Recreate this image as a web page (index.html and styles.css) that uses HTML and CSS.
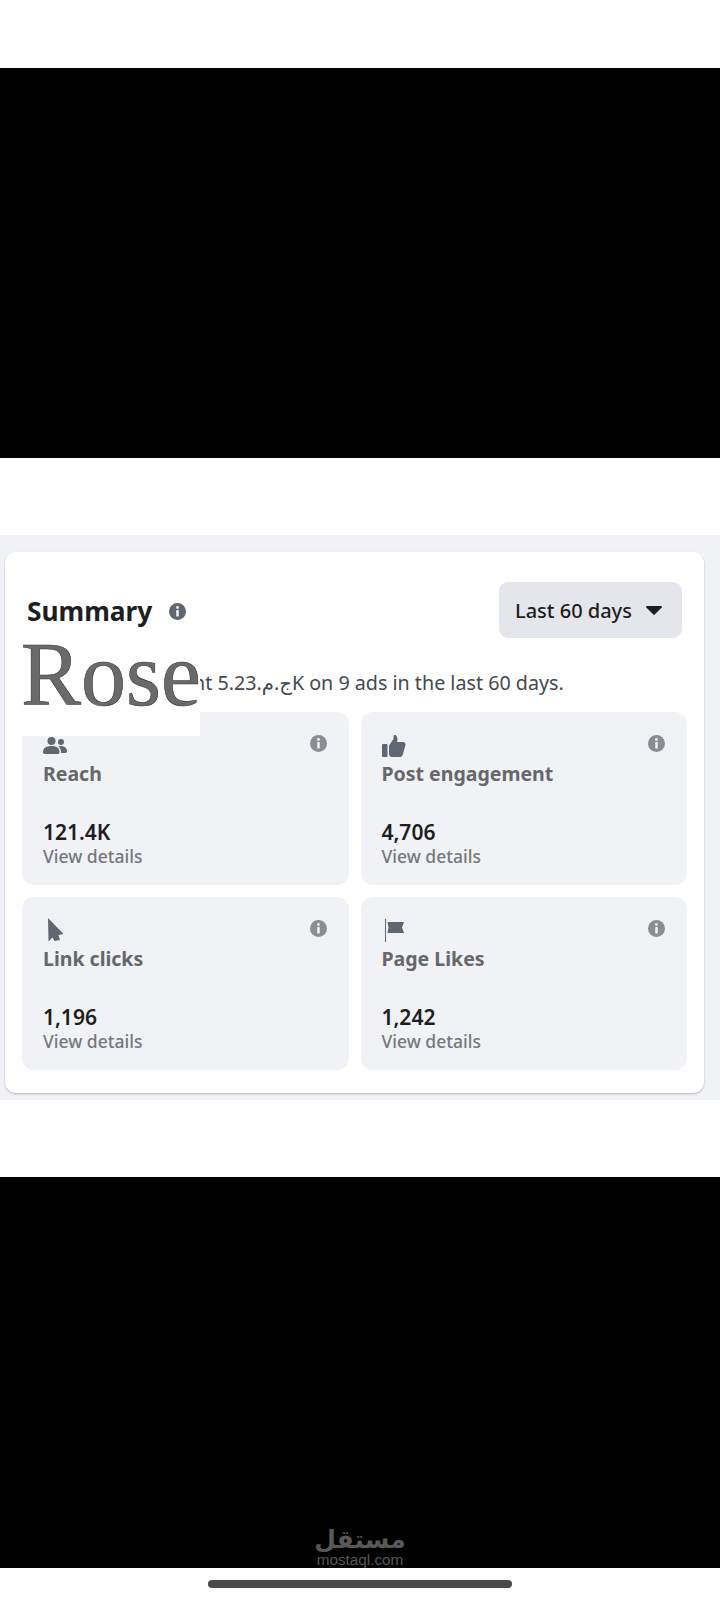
FILE: index.html
```html
<!DOCTYPE html>
<html lang="en">
  <head>
    <meta charset="UTF-8" />
    <meta name="viewport" content="width=device-width, initial-scale=1.0" />
    <title>Summary</title>
    <link rel="stylesheet" href="styles.css">
  </head>
  <body>
    <div class="space-top"></div>
    <div class="black-top"></div>
    <div class="space-mid"></div>

    <section class="panel">
      <div class="card">
        <div class="card-head">
          <h2 class="title">
            Summary
            <svg class="info info-dark" viewBox="0 0 16 16"><circle cx="8" cy="8" r="8"/><circle class="info-mark" cx="8" cy="4.2" r="1.4"/><rect class="info-mark" x="6.8" y="6.6" width="2.4" height="6.2" rx="0.6"/></svg>
          </h2>
          <button class="range">
            Last 60 days
            <svg class="caret" viewBox="0 0 16 9"><path d="M1 0h14c.8 0 1.2.9.7 1.5L8.7 8.6c-.4.4-1 .4-1.4 0L.3 1.5C-.2.9.2 0 1 0z"/></svg>
          </button>
        </div>

        <p class="spent">nt 5.23<bdi>ج.م.</bdi>K on 9 ads in the last 60 days.</p>

        <div class="tiles">
          <div class="tile">
            <div class="tile-head">
              <svg class="tile-icon" viewBox="0 0 24 24"><circle cx="8.5" cy="6" r="4"/><circle cx="18" cy="7" r="3"/><path d="M0 17c0-4 3.5-6 8.5-6s8 2 8 6c0 1.5-.8 2-2 2H2c-1.2 0-2-.5-2-2z"/><path d="M15.5 11.2c4-.7 8.500.8 8.500 4.800 0 1.500-.7 2-1.800 2h-4c0-2.800-.8-5-2.700-6.800z"/></svg>
              <svg class="info" viewBox="0 0 16 16"><circle cx="8" cy="8" r="8"/><circle class="info-mark" cx="8" cy="4.2" r="1.4"/><rect class="info-mark" x="6.8" y="6.6" width="2.4" height="6.2" rx="0.6"/></svg>
            </div>
            <div class="tile-label">Reach</div>
            <div class="tile-value">121.4K</div>
            <div class="tile-link">View details</div>
          </div>

          <div class="tile">
            <div class="tile-head">
              <svg class="tile-icon" viewBox="0 0 24 24"><rect x="0" y="9" width="5.5" height="13" rx="1"/><path d="M7 10.500 11.500 4V1.500C11.500.5 12.500-.3 13.500.2c2 1 2.500 3.500 1.500 6.800h6c1.800 0 2.900 1.600 2.400 3.200l-2.500 9c-.4 1.300-1.500 2.800-2.800 2.800H10c-1.700 0-3-1.300-3-3z"/></svg>
              <svg class="info" viewBox="0 0 16 16"><circle cx="8" cy="8" r="8"/><circle class="info-mark" cx="8" cy="4.2" r="1.4"/><rect class="info-mark" x="6.8" y="6.6" width="2.4" height="6.2" rx="0.6"/></svg>
            </div>
            <div class="tile-label">Post engagement</div>
            <div class="tile-value">4,706</div>
            <div class="tile-link">View details</div>
          </div>

          <div class="tile">
            <div class="tile-head">
              <svg class="tile-icon" viewBox="0 0 24 24"><path d="M5-2 20.500 14 15.500 15 17 20 11.500 21 9.500 17.500 5.500 21.500z"/></svg>
              <svg class="info" viewBox="0 0 16 16"><circle cx="8" cy="8" r="8"/><circle class="info-mark" cx="8" cy="4.2" r="1.4"/><rect class="info-mark" x="6.8" y="6.6" width="2.4" height="6.2" rx="0.6"/></svg>
            </div>
            <div class="tile-label">Link clicks</div>
            <div class="tile-value">1,196</div>
            <div class="tile-link">View details</div>
          </div>

          <div class="tile">
            <div class="tile-head">
              <svg class="tile-icon" viewBox="0 0 24 24"><rect x="3" y="-1" width="1" height="23"/><path d="M5.500 2h16.500l-2 5.500 2 5.500H5.500l1-5.500z"/></svg>
              <svg class="info" viewBox="0 0 16 16"><circle cx="8" cy="8" r="8"/><circle class="info-mark" cx="8" cy="4.2" r="1.4"/><rect class="info-mark" x="6.8" y="6.6" width="2.4" height="6.2" rx="0.6"/></svg>
            </div>
            <div class="tile-label">Page Likes</div>
            <div class="tile-value">1,242</div>
            <div class="tile-link">View details</div>
          </div>
        </div>

        <div class="stamp">Rose</div>
      </div>
    </section>

    <div class="space-low"></div>

    <div class="black-bottom">
      <div class="mark-ar">مستقل</div>
      <div class="mark-en">mostaql.com</div>
    </div>

    <div class="nav-area"><div class="home-bar"></div></div>
  </body>
</html>
```

FILE: styles.css
```css
body {
  margin: 0;
  background-color: #fff;
  font-family: "Noto Sans", "DejaVu Sans", sans-serif;
}
.space-top {
  height: 68px;
}
.black-top {
  height: 390px;
  background-color: #000;
}
.space-mid {
  height: 77px;
}
.panel {
  height: 565px;
  box-sizing: border-box;
  padding: 17px 16px 0 5px;
  background-color: #f0f2f5;
}
.card {
  position: relative;
  height: 541px;
  box-sizing: border-box;
  padding: 30px 17px 0;
  background-color: #fff;
  border-radius: 11px;
  box-shadow: 0 1px 2px rgba(0, 0, 0, 0.25);
}
.card-head {
  display: flex;
  justify-content: space-between;
  padding-right: 5px;
}
.title {
  display: flex;
  align-items: center;
  gap: 17px;
  margin: 0;
  padding-top: 2px;
  padding-left: 5px;
  font-size: 26.3px;
  font-weight: 700;
  color: #1c1e21;
}
.range {
  display: flex;
  align-items: center;
  justify-content: space-between;
  width: 183px;
  height: 56px;
  padding: 0 20px 0 16px;
  border: none;
  border-radius: 9px;
  background-color: #e4e6eb;
  font-family: inherit;
  font-size: 20px;
  font-weight: 500;
  color: #1c1e21;
}
.caret {
  width: 16px;
  height: 9px;
  fill: #1c1e21;
}
.spent {
  margin: 32px 0 16px;
  padding-left: 171px;
  font-size: 19.7px;
  line-height: 26px;
  color: #444950;
}
.tiles {
  display: grid;
  grid-template-columns: 1fr 1fr;
  gap: 12px;
}
.tile {
  height: 173px;
  box-sizing: border-box;
  padding: 23px 22px 0 21px;
  background-color: #f0f2f5;
  border-radius: 12px;
}
.tile-head {
  display: flex;
  align-items: flex-start;
  justify-content: space-between;
  height: 27px;
}
.tile-icon {
  width: 24px;
  height: 24px;
  overflow: visible;
  fill: #606770;
}
.info {
  width: 17px;
  height: 17px;
  fill: #8a8d91;
}
.info-dark {
  fill: #606770;
}
.info-mark {
  fill: #f0f2f5;
}
.tile-label {
  font-size: 19.5px;
  line-height: 24px;
  font-weight: 700;
  color: #65676b;
}
.tile-value {
  margin-top: 32px;
  font-size: 21px;
  line-height: 28px;
  font-weight: 600;
  color: #1c1e21;
}
.tile-link {
  margin-top: -1px;
  font-size: 17.5px;
  line-height: 22px;
  font-weight: 500;
  color: #75787d;
}
.stamp {
  position: absolute;
  left: 15px;
  top: 96px;
  width: 180px;
  height: 88px;
  background-color: #fff;
  font-family: "Liberation Serif", serif;
  font-size: 90px;
  line-height: 54px;
  text-indent: 1px;
  color: #6a6a6a;
  -webkit-text-stroke: 0.6px #333;
}
.space-low {
  height: 77px;
}
.black-bottom {
  display: flex;
  flex-direction: column;
  align-items: center;
  justify-content: flex-end;
  height: 391px;
  background-color: #000;
  color: #585858;
}
.mark-ar {
  font-family: "DejaVu Sans", sans-serif;
  font-size: 25px;
  line-height: 25px;
  font-weight: 700;
}
.mark-en {
  font-family: "Liberation Sans", sans-serif;
  font-size: 15.3px;
  line-height: 16px;
}
.nav-area {
  display: flex;
  justify-content: center;
  padding-top: 12px;
}
.home-bar {
  width: 304px;
  height: 8px;
  border-radius: 4px;
  background-color: #4a4a4a;
}
```
